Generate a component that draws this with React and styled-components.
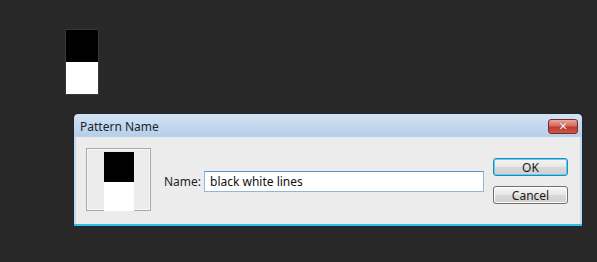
import React from "react";
import styled, { createGlobalStyle } from "styled-components";

const Global = createGlobalStyle`
  html, body { margin: 0; padding: 0; background: #282828; }
  body { font-family: "Noto Sans", "Open Sans", sans-serif; font-size: 12px; color: #1a1a1a; }
`;

const Page = styled.div`
  width: 597px;
  height: 262px;
  display: flex;
  flex-direction: column;
  padding-top: 30px;
  box-sizing: border-box;
  overflow: hidden;
`;

const Swatch = styled.div`
  margin-left: 66px;
  width: 32px;
  height: 64px;
  display: flex;
  flex-direction: column;
  box-shadow: 0 0 0 1px rgba(255, 255, 255, 0.08);
`;

const Half = styled.div`
  flex: 1;
  background: ${(p) => (p.$dark ? "#000" : "#fff")};
`;

const Dialog = styled.div`
  margin: 19px 0 0 73px;
  width: 510px;
  height: 114px;
  box-sizing: border-box;
  border: 1px solid #1c2530;
  border-radius: 5px 5px 0 0;
  background: linear-gradient(#d3e3f3, #b6cfe9 22px, #c4daef 24px, #c2d9ee);
  display: flex;
  flex-direction: column;
  box-shadow: inset 0 -2px 0 #2fbfe6;
`;

const TitleBar = styled.div`
  height: 23px;
  display: flex;
  align-items: center;
  padding: 0 4px 0 6px;
  flex: none;
`;

const Title = styled.div`
  flex: 1;
  font-size: 12px;
  color: #1a2632;
  padding-top: 2px;
`;

const CloseBtn = styled.div`
  width: 30px;
  height: 15px;
  margin-top: 1px;
  box-sizing: border-box;
  border: 1px solid #7a2a24;
  border-radius: 3px;
  background: linear-gradient(#e8a79f, #d46a5f 45%, #c03a2e 55%, #c9564a);
  display: flex;
  align-items: center;
  justify-content: center;
  color: #fff;
  font-family: "DejaVu Sans", sans-serif;
  font-weight: bold;
  font-size: 11px;
  line-height: 1;
  text-shadow: 0 0 1px #6a1a14;
`;

const Body = styled.div`
  flex: 1;
  margin: 0 2px 2px;
  background: #ececec;
  display: flex;
  align-items: flex-start;
  padding: 11px 12px 0 10px;
`;

const Preview = styled.div`
  width: 65px;
  height: 63px;
  box-sizing: border-box;
  border: 1px solid #a9a9a9;
  box-shadow: inset 1px 1px 0 #f8f8f8, inset -1px -1px 0 #f8f8f8;
  display: flex;
  justify-content: center;
  padding-top: 3px;
  flex: none;
`;

const Pattern = styled.div`
  width: 30px;
  height: 59px;
  display: flex;
  flex-direction: column;
`;

const NameRow = styled.div`
  display: flex;
  align-items: center;
  margin: 23px 0 0 13px;
  gap: 6px;
`;

const Label = styled.label`
  width: 34px;
  white-space: nowrap;
  font-size: 12px;
  color: #1e1e1e;
`;

const Input = styled.div`
  width: 280px;
  height: 21px;
  box-sizing: border-box;
  border: 1px solid #8fb7de;
  border-top-color: #5d8fc2;
  background: #fff;
  padding: 0 5px;
  display: flex;
  align-items: center;
  font-size: 12px;
  color: #111;
`;

const Buttons = styled.div`
  margin: 10px 0 0 9px;
  display: flex;
  flex-direction: column;
  gap: 10px;
`;

const Button = styled.div`
  width: 75px;
  height: 18px;
  box-sizing: border-box;
  border: 1px solid ${(p) => (p.$default ? "#3c7fb1" : "#707070")};
  border-radius: 3px;
  background: linear-gradient(#f6f6f6, #e6e6e6 50%, #d8d8d8 52%, #d0d0d0);
  box-shadow: ${(p) => (p.$default ? "inset 0 0 0 1px #48d8fb" : "inset 0 0 0 1px #fcfcfc")};
  display: flex;
  align-items: center;
  justify-content: center;
  font-size: 12px;
  color: #1a1a1a;
`;

export default function App() {
  return (
    <Page>
      <Global />
      <Swatch>
        <Half $dark />
        <Half />
      </Swatch>
      <Dialog>
        <TitleBar>
          <Title>Pattern Name</Title>
          <CloseBtn>✕</CloseBtn>
        </TitleBar>
        <Body>
          <Preview>
            <Pattern>
              <Half $dark />
              <Half />
            </Pattern>
          </Preview>
          <NameRow>
            <Label>Name:</Label>
            <Input>black white lines</Input>
          </NameRow>
          <Buttons>
            <Button $default>OK</Button>
            <Button>Cancel</Button>
          </Buttons>
        </Body>
      </Dialog>
    </Page>
  );
}
